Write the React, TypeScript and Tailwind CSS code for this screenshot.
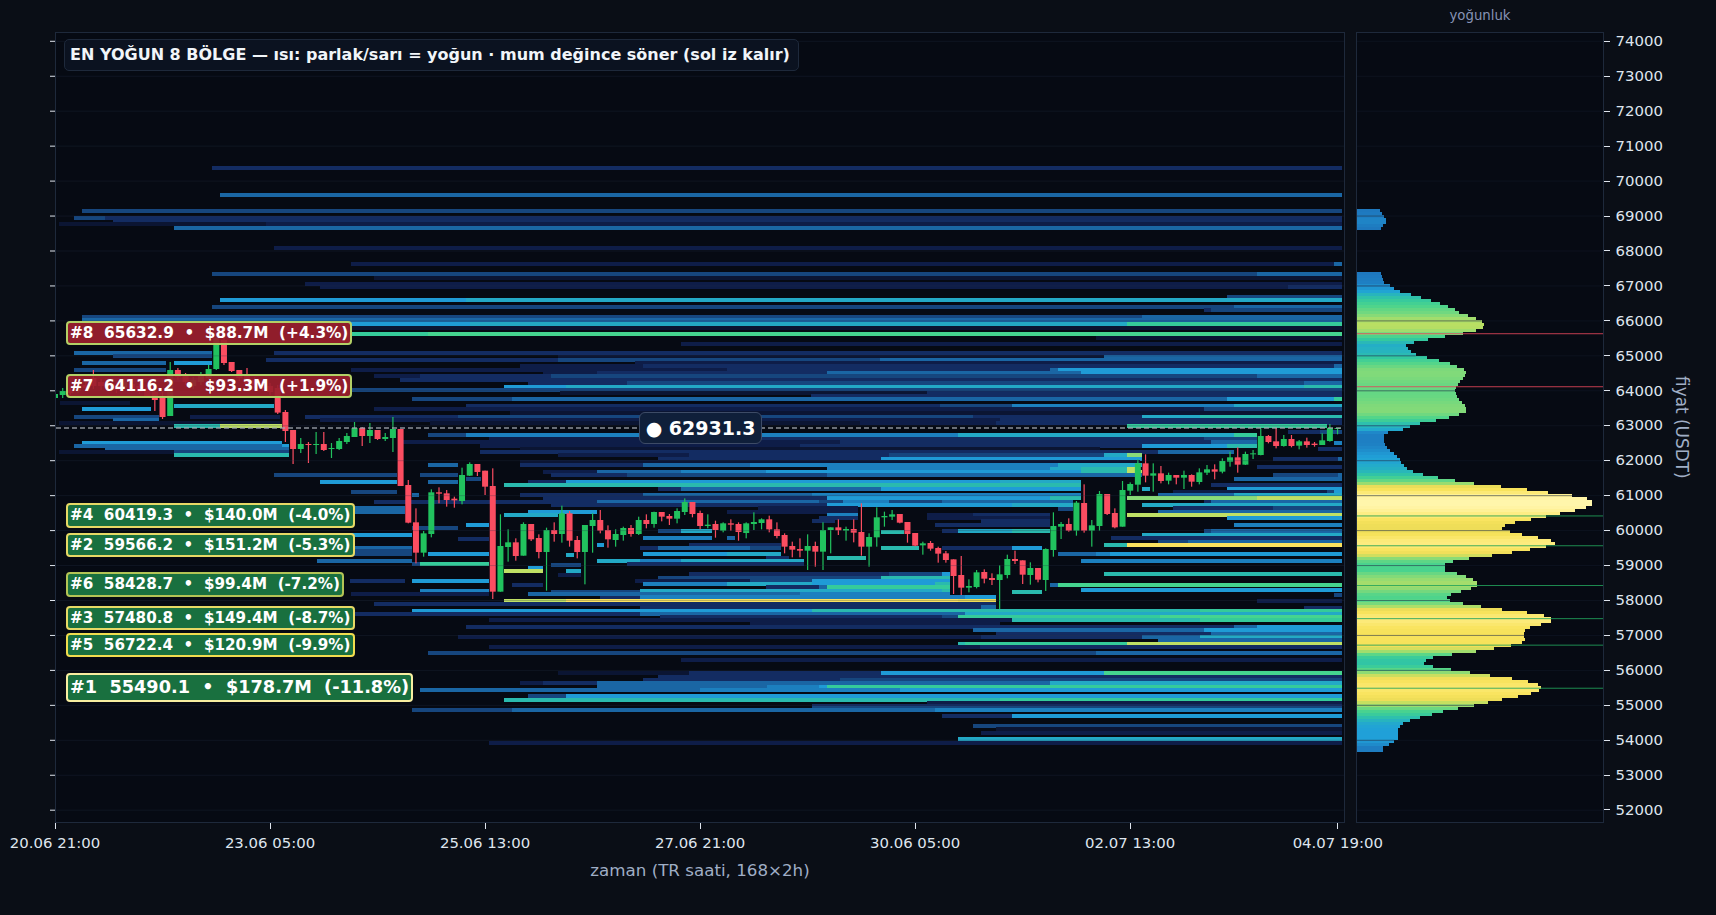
import React from 'react';

// page coordinates of the price scale: 74000 sits at y=41.3, 1000 USDT = 34.95px
const priceY = (p: number) => 41.3 + (74000 - p) * 0.03495;
const candleX = (i: number) => 55 + 7.68 * i;
const RIGHT = 1342;

const HEAT: Record<string, string> = {
  a: '#0b1533', b: '#0e1d48', c: '#132c62', d: '#16467e', e: '#1a66a4', f: '#1c80bf', g: '#1f9bd6',
  h: '#23a9c6', i: '#2abaae', j: '#35cb9a', k: '#45d48f', l: '#8adb78', m: '#bfe065', n: '#f0dc55', o: '#fbe25e',
};

// "y x key x key ... [end]"
const ROWS = [
  '166 212 c', '193 220 e', '209 82 d', '216 74 d 105 c', '219 113 c', '222 59 a 266 b', '226 174 e', '246 274 b',
  '262 351 b 1334 e', '272 212 d 1257 e', '276 374 a', '282 305 b', '285 320 b 1288 c', '295 1227 d', '298 220 g 466 h',
  '305 212 d 1234 e', '308 1204 c 1211 d', '315 82 d 458 d 1142 e', '318 82 e 1158 e', '322 350 g 470 h 1127 j',
  '326 350 a', '332 350 j 428 k', '336 1096 a', '342 681 b', '351 74 e 212', '351 274 c', '354 113 d 212',
  '355 558 a 1104 e', '358 266 c 558 d 880 e', '361 82 e 166', '361 174 g 212', '361 635 b', '364 520 b 643 c 1334 e',
  '368 74 d 166', '368 351 b 727 c 1050 e 1058 g', '371 543 b 597 c 827 e 1081 g', '374 374 b 420 c 551 d 1257 e',
  '378 105 c 200', '378 400 c', '381 528 c 627 d 1304 e', '385 504 g 566 h 1304 i', '388 351 d', '391 120 b 200',
  '391 560 a 927 c', '394 811 c', '397 412 d 512 e 1227 g 1334 j', '401 60 a 130', '404 174 h 274',
  '404 466 c 940 d 1012 f 1234 h', '407 82 g 151', '407 374 b 1204 d', '411 510 a', '415 74 d 159', '415 190 b 280',
  '415 305 c 458 d 973 c 1142 h 1200 i', '418 113 e 159', '418 320 b 1000 c', '421 59 a 280', '421 430 a 860 b 996 c',
  '424 174 i 220 m 282', '424 1127 j 1327', '430 1288 c 1320 d', '433 428 d 466 f 958 h 1234 j 1257',
  '437 489 b 700 c 1204 d 1257', '440 400 b 840 c 1211 e 1257', '441 82 g 282', '441 1334 f', '444 74 e 282 g 289',
  '444 480 b 800 c 1142 g 1227 i 1257', '447 105 e 289', '447 520 a 1100', '447 1318 c', '450 59 a 174 d 289',
  '450 480 c 1158 e 1234', '453 174 i 289', '453 558 b 689 c 889 d 1104 h 1127 l 1142', '457 658 c 881 g 1142',
  '457 1273 c 1338 e', '460 520 a 1140', '463 428 e 458', '463 520 c 643 e 750 f 1058 h 1142', '465 1257 c',
  '467 827 f 1050 h 1081 i 1127 m 1135', '470 543 b 597 e 681 f 766 g 1081 i 1127 m 1142', '473 274 d 397', '473 420 d 458',
  '473 551 c 627 d 827 e 1142', '473 1273 d 1338 e', '477 466 d 481', '477 1234 e', '480 320 g 397', '480 428 e 458',
  '480 528 c 566 g 1000 h 1081', '483 504 i 1081', '483 1211 c', '487 658 c 681 e 881 g 1081', '487 1142 h 1150', '487 1227 g',
  '490 351 d 397', '490 1173 b', '490 1327 d', '490 1334 g', '493 412 e 419', '493 520 c 643 e 812 f 1081', '493 1158 e 1234 h',
  '496 543 c 827 g 1050 i 1081', '496 1127 l 1257 m', '500 374 c 543 c 597 e 819 d 843 f 889 d 942 e 1073', '500 1204 c 1211 e',
  '503 551 c 627 c 827 g 1012 h 1073', '503 1142 h', '506 350 e 405', '506 758 b 858', '506 1173 c 1273 d', '507 1058 d 1073',
  '510 350 e 405', '510 528 g 597', '510 727 b 858', '510 1158 e', '513 504 h 558', '513 827 f 858', '513 927 b 973 c 1050', '513 1127 m',
  '516 819 c 858', '516 927 b 1050', '516 1227 g', '519 812 c 835', '519 981 c 1050', '523 466 g 489', '523 935 c 1050', '523 1234 f',
  '526 412 d 458', '529 658 d 681 h 712', '529 942 c 958 h 1012 i 1050', '530 881 i 904', '529 1204 d 1211 e', '533 350 g 412',
  '533 1142 h', '536 643 f 712', '536 727 e 735', '536 1111 c', '537 458 c 489', '540 1158 d 1188 e', '543 597 g 604', '543 689 c 781',
  '543 1104 i 1127 o', '546 350 e 412', '546 640 c 658 e 750 d 781', '546 881 i 919', '546 942 c 1012 g 1042', '549 350 d 412',
  '552 350 d 412', '552 428 g 489', '553 566 h 574', '552 643 g 727 h 781', '552 1058 e 1096 f 1110 g', '556 766 c 789', '556 827 i 866',
  '559 317 e 412', '559 597 h 640 f 681 h 804', '559 1081 f', '562 412 d 420 j 489', '563 551 d 581', '562 627 c 804', '566 528 g 543',
  '569 504 m 543', '569 566 h 581', '572 1104 i', '572 689 c 889 d 942 g 950', '573 558 b 581', '576 658 d 881 i 950', '579 350 c 405',
  '579 412 g 489', '579 635 b 750 d 812 g 950', '582 643 f 727 h 812 g 935 i 950', '583 512 c 543', '583 1050 e 1058 k',
  '585 766 c 819 e 827 j 950', '589 420 f 489', '588 1081 g', '589 640 h 942 i 950', '590 551 d 640', '590 1012 i 1042', '592 351 b 489',
  '592 528 e 640 e 800 f 950', '593 1334 d', '595 640 f 965 g 996', '596 600 c 640', '599 1257 b', '599 504 m 566 o 958 n 996',
  '602 374 c 996', '605 640 c 927 c 981 e 996', '606 1304 c', '609 412 g 812 i 1200 j', '612 350 c 640 e 965 h', '615 660 c 942 d 958 j 1160 k',
  '618 489 b 1012 i 1200 j', '621 750 b 1000', '625 466 c 1234 e 1257 g', '628 973 e 1204 g', '632 996 c 1211 e',
  '635 458 b 981 c 1142 e 1200 h', '638 1158 e', '642 958 i 965 j 1127 m', '645 489 b 980 c', '651 428 d 1096 e', '658 681 b',
  '671 558 a 689 c 881 g 1104 k', '675 658 c', '678 643 c 840 d', '681 520 b 543 c 597 e 1050 h', '685 597 e 767 f 819 g 827 j',
  '688 420 e 700 f 900 g', '694 528 d 566 g', '698 504 i 1000 j', '701 927 b', '704 812 c', '706 812 d', '708 412 d 512 e 935 f',
  '714 942 c 1012 g', '724 973 d', '727 996 a', '731 981 b', '737 958 h', '741 489 b',
].sort((a, b) => parseInt(a) - parseInt(b));

type Candle = [number, number, number, number, 'g' | 'r'];

const thirds = (base: number, list: Candle[]): Candle[] =>
  list.map(([t, b, wt, wb, c]) => [base + t / 3, base + b / 3, base + wt / 3, base + wb / 3, c]);

const CANDLES: Candle[] = [
  [394, 398, 394, 398, 'g'], [391, 395, 388, 398, 'g'], [390, 393, 388, 395, 'r'], [388, 391, 386, 393, 'g'],
  [385, 388, 382, 391, 'r'], [378, 386, 370, 389, 'r'], [382, 386, 379, 390, 'r'], [384, 388, 381, 391, 'g'],
  [385, 390, 382, 393, 'r'], [382, 387, 379, 389, 'g'], [384, 389, 381, 392, 'r'], [386, 392, 384, 394, 'r'],
  [388, 396, 385, 398, 'r'], [392, 400, 388, 411, 'r'], [398, 417, 392, 419, 'r'], [370, 416, 362, 416, 'g'],
  [370, 377, 368, 380, 'r'], [376, 382, 373, 385, 'r'], [380, 386, 377, 389, 'g'], [376, 382, 372, 385, 'g'],
  [369, 378, 365, 381, 'g'], [338, 369, 332, 370, 'g'], [340, 363, 336, 365, 'r'], [362, 371, 362, 372, 'r'],
  [370, 378, 370, 381, 'r'], [376, 384, 368, 386, 'r'], [380, 385, 377, 388, 'r'], [384, 388, 381, 391, 'r'],
  [386, 392, 383, 395, 'r'], [388, 412.6, 385, 414, 'r'], [412, 431, 410, 442, 'r'], [430, 449, 430, 464, 'r'],
  [444, 449, 438, 453, 'g'], [444, 445, 442, 463, 'r'], [444, 445, 432, 454, 'g'], [444, 450, 432, 451, 'r'],
  [448, 449, 443, 458, 'g'], [441, 449, 438, 450, 'g'], [436, 442, 433, 444, 'g'], [428, 437, 422, 437, 'g'],
  [428, 436, 427, 446, 'r'], [430, 436, 423, 443, 'g'], [430, 439, 430, 440, 'r'], [437, 439, 433, 441, 'g'],
  [429, 438, 417, 452, 'g'],
  ...thirds(400, [
    [87, 258, 87, 258, 'r'], [255, 368, 240, 370, 'r'], [367, 458, 325, 490, 'r'], [400, 458, 393, 470, 'g'],
    [277, 402, 268, 412, 'g'], [277, 281, 262, 310, 'r'], [280, 300, 270, 320, 'r'], [296, 301, 290, 323, 'r'],
    [225, 303, 203, 313, 'g'], [192, 227, 187, 228, 'g'], [192, 216, 192, 228, 'r'], [212, 260, 212, 285, 'r'],
    [258, 575, 205, 597, 'r'], [438, 575, 343, 575, 'g'], [427, 441, 388, 485, 'g'], [427, 468, 415, 482, 'r'],
    [372, 467, 367, 467, 'g'], [372, 418, 372, 423, 'r'], [414, 456, 403, 475, 'r'], [390, 456, 383, 572, 'g'],
    [390, 402, 367, 425, 'r'], [340, 402, 317, 428, 'g'], [340, 422, 333, 440, 'r'], [420, 456, 408, 475, 'r'],
    [375, 456, 375, 553, 'g'], [360, 378, 340, 458, 'g'], [360, 392, 330, 400, 'r'], [390, 418, 376, 443, 'r'],
    [402, 420, 388, 440, 'g'], [384, 405, 380, 422, 'g'], [384, 402, 375, 410, 'r'], [360, 402, 350, 405, 'g'],
    [360, 372, 343, 385, 'r'], [336, 372, 335, 383, 'g'], [336, 350, 336, 364, 'r'], [348, 356, 342, 375, 'r'],
    [333, 356, 325, 370, 'g'], [306, 336, 295, 345, 'g'], [306, 342, 306, 352, 'r'], [339, 378, 332, 388, 'r'],
    [374, 378, 343, 385, 'g'], [372, 390, 362, 413, 'r'], [370, 392, 367, 397, 'g'], [370, 374, 358, 392, 'r'],
    [372, 396, 367, 422, 'r'], [370, 399, 367, 415, 'g'], [366, 372, 337, 390, 'g'], [358, 369, 355, 388, 'g'],
    [358, 388, 347, 397, 'r'], [388, 408, 367, 415, 'r'], [405, 440, 400, 460, 'r'], [438, 449, 425, 472, 'r'],
    [447, 452, 415, 472, 'r'],
  ]),
  ...thirds(420, [
    [378, 392, 343, 450, 'g'], [378, 395, 365, 440, 'r'], [330, 395, 307, 450, 'g'], [322, 330, 322, 400, 'g'],
    [322, 331, 298, 345, 'r'], [327, 332, 320, 362, 'g'], [327, 338, 298, 367, 'r'], [336, 380, 250, 407, 'r'],
    [351, 380, 340, 440, 'g'], [292, 352, 262, 380, 'g'], [288, 292, 275, 320, 'g'], [283, 290, 270, 300, 'g'],
    [282, 308, 282, 310, 'r'], [306, 342, 306, 368, 'r'], [339, 377, 339, 379, 'r'], [370, 376, 365, 404, 'g'],
    [369, 386, 363, 392, 'r'], [384, 401, 380, 428, 'r'], [400, 420, 393, 428, 'r'], [418, 468, 418, 522, 'r'],
    [465, 503, 408, 525, 'r'], [498, 503, 478, 517, 'g'], [457, 501, 450, 505, 'g'], [456, 476, 448, 490, 'r'],
    [474, 480, 460, 495, 'r'], [463, 480, 436, 567, 'g'], [417, 465, 404, 475, 'g'], [417, 423, 392, 432, 'r'],
    [421, 464, 421, 492, 'r'], [444, 465, 427, 494, 'g'], [444, 479, 444, 487, 'r'], [387, 480, 385, 513, 'g'],
    [318, 390, 277, 410, 'g'], [312, 320, 306, 357, 'g'], [312, 332, 295, 335, 'r'], [248, 332, 243, 347, 'g'],
    [249, 332, 193, 338, 'r'], [316, 332, 300, 380, 'g'], [222, 318, 213, 332, 'g'], [222, 282, 222, 285, 'r'],
    [279, 322, 265, 325, 'r'], [210, 320, 183, 320, 'g'], [192, 212, 187, 225, 'g'], [130, 194, 118, 215, 'g'],
    [130, 167, 103, 187, 'r'], [160, 167, 130, 215, 'g'], [160, 183, 138, 190, 'r'], [165, 182, 158, 193, 'g'],
    [165, 173, 165, 193, 'r'], [165, 173, 152, 207, 'g'], [165, 185, 163, 200, 'r'], [157, 186, 145, 193, 'g'],
    [148, 158, 135, 165, 'g'], [148, 155, 133, 178, 'r'], [123, 155, 115, 160, 'g'], [112, 125, 95, 140, 'g'],
    [112, 134, 82, 158, 'r'], [102, 134, 95, 135, 'g'], [100, 103, 90, 117, 'g'], [48, 105, 25, 106, 'g'],
    [48, 66, 45, 70, 'r'], [64, 78, 23, 85, 'r'], [57, 78, 45, 80, 'g'], [57, 78, 45, 82, 'r'], [64, 77, 60, 88, 'g'],
    [64, 75, 53, 83, 'r'], [71, 75, 66, 80, 'r'], [61, 75, 40, 75, 'g'], [24, 63, 12, 65, 'g'], [24, 26, 24, 43, 'g'],
  ]),
];

// density profile as control points [y, width]
const PROFILE: [number, number][] = [
  [272, 24], [275, 25], [278, 26], [281, 27], [284, 33], [289, 40], [292, 50], [295, 61], [298, 71], [301, 80], [304, 88],
  [307, 96], [312, 104], [315, 114], [318, 122], [322, 127], [325, 127], [326, 126], [329, 119], [332, 106], [335, 88],
  [338, 71], [341, 57], [344, 49], [352, 55], [355, 66], [358, 78], [361, 90], [365, 100], [368, 107], [372, 109], [375, 108],
  [378, 105], [381, 102], [385, 99], [390, 98], [394, 99], [400, 103], [402, 107], [406, 109], [410, 109], [412, 105],
  [415, 96], [418, 84], [421, 68], [424, 53], [427, 53], [429, 39], [431, 31], [434, 27], [440, 27], [443, 28], [448, 32],
  [451, 36], [457, 42], [461, 44], [467, 50], [471, 58], [474, 70], [477, 87], [481, 108], [484, 134], [487, 163], [491, 191],
  [494, 215], [497, 230], [501, 236], [504, 234], [507, 226], [510, 214], [513, 198], [517, 180], [520, 161], [524, 148],
  [527, 145], [530, 153], [534, 169], [537, 187], [540, 198], [543, 198], [546, 184], [550, 162], [554, 135], [557, 112],
  [560, 96], [563, 88], [570, 88], [571, 95], [573, 104], [577, 114], [580, 120], [585, 120], [587, 114], [590, 104],
  [593, 94], [597, 89], [600, 95], [603, 111], [607, 136], [610, 163], [613, 183], [616, 194], [620, 194], [623, 184],
  [626, 173], [630, 166], [637, 168], [640, 167], [643, 160], [646, 143], [650, 119], [653, 95], [656, 76], [660, 66],
  [663, 68], [666, 80], [669, 101], [673, 125], [676, 149], [679, 168], [683, 181], [686, 184], [690, 181], [693, 170],
  [696, 156], [699, 140], [703, 122], [706, 106], [709, 90], [713, 75], [716, 63], [719, 53], [722, 46], [726, 42],
  [729, 41], [738, 41], [739, 39], [742, 34], [746, 26], [749, 26],
];
const UPPER: [number, number][] = [[209, 23], [212, 25], [215, 27], [218, 29], [221, 29], [223, 27], [226, 24], [229, 24]];

const RAMP: [number, string][] = [
  [0, '#1c6db4'], [24, '#1e78be'], [41, '#20a0d8'], [50, '#25b0c4'], [70, '#33c8a0'], [90, '#4dd48c'], [110, '#85da78'],
  [128, '#bcdf62'], [145, '#eedd58'], [170, '#f8e35c'], [200, '#fdec80'], [236, '#fff6ad'],
];

const rampColor = (w: number) => {
  for (let i = 1; i < RAMP.length; i++) {
    if (w <= RAMP[i][0]) {
      const [w0, c0] = RAMP[i - 1];
      const [w1, c1] = RAMP[i];
      const t = (w - w0) / (w1 - w0);
      const ch = (s: number) => {
        const a = parseInt(c0.slice(s, s + 2), 16);
        const b = parseInt(c1.slice(s, s + 2), 16);
        return Math.round(a + (b - a) * t);
      };
      return `rgb(${ch(1)},${ch(3)},${ch(5)})`;
    }
  }
  return RAMP[RAMP.length - 1][1];
};

const bins = (points: [number, number][]) => {
  const out: { y: number; w: number }[] = [];
  for (let y = points[0][0]; y < points[points.length - 1][0] + 1; y += 3) {
    let j = 0;
    while (j < points.length - 2 && points[j + 1][0] <= y) j++;
    const [y0, w0] = points[j];
    const [y1, w1] = points[j + 1];
    out.push({ y, w: w0 + ((w1 - w0) * Math.min(1, (y - y0) / (y1 - y0))) });
  }
  return out;
};

const TICKS = Array.from({ length: 23 }, (_, i) => 74000 - i * 1000);
const LEVELS = [
  { price: 65632.9, up: true }, { price: 64116.2, up: true }, { price: 60419.3, up: false }, { price: 59566.2, up: false },
  { price: 58428.7, up: false }, { price: 57480.8, up: false }, { price: 56722.4, up: false }, { price: 55490.1, up: false },
];

const BADGES = [
  { text: '#8  65632.9  •  $88.7M  (+4.3%)', cls: 'top-[288px] bg-[#9b1f2ded] border-[#b3d066] text-[15.3px] h-[24px]' },
  { text: '#7  64116.2  •  $93.3M  (+1.9%)', cls: 'top-[341px] bg-[#9b1f2ded] border-[#b3d066] text-[15.3px] h-[24px]' },
  { text: '#4  60419.3  •  $140.0M  (-4.0%)', cls: 'top-[470px] bg-[#19703f] border-[#e6d965] text-[15.2px] h-[25px]' },
  { text: '#2  59566.2  •  $151.2M  (-5.3%)', cls: 'top-[500px] bg-[#19703f] border-[#e6d965] text-[15.2px] h-[24px]' },
  { text: '#6  58428.7  •  $99.4M  (-7.2%)', cls: 'top-[539px] bg-[#19703f] border-[#b3c455] text-[15.2px] h-[25px]' },
  { text: '#3  57480.8  •  $149.4M  (-8.7%)', cls: 'top-[573px] bg-[#19703f] border-[#e6d965] text-[15.2px] h-[24px]' },
  { text: '#5  56722.4  •  $120.9M  (-9.9%)', cls: 'top-[600px] bg-[#19703f] border-[#f0dd4e] text-[15.2px] h-[24px]' },
  { text: '#1  55490.1  •  $178.7M  (-11.8%)', cls: 'top-[640px] bg-[#19703f] border-[#f8efa0] text-[17.7px] h-[29px]' },
];

const XLABELS = ['20.06 21:00', '23.06 05:00', '25.06 13:00', '27.06 21:00', '30.06 05:00', '02.07 13:00'];

const Heatmap = () => (
  <g shapeRendering="crispEdges">
    {ROWS.map((row) => {
      const t = row.split(' ');
      const y = Number(t[0]);
      const n = Math.floor((t.length - 1) / 2);
      const end = t.length % 2 === 0 ? Number(t[t.length - 1]) : RIGHT;
      return Array.from({ length: n }, (_, s) => {
        const x0 = Number(t[1 + s * 2]);
        const x1 = s < n - 1 ? Number(t[3 + s * 2]) : end;
        return <rect key={`${row}-${s}`} x={x0} y={y} width={x1 - x0} height={3.6} fill={HEAT[t[2 + s * 2]]} />;
      });
    })}
  </g>
);

const Candles = () => (
  <g clipPath="url(#plot-area)">
    {CANDLES.map(([top, bot, wt, wb, c], i) => {
      const x = candleX(i);
      const fill = c === 'g' ? '#21c25e' : '#fb4d61';
      return (
        <g key={i} fill={fill}>
          <rect x={x - 0.6} y={wt} width={1.2} height={Math.max(0, wb - wt)} />
          <rect x={x - 3} y={top} width={6} height={Math.max(1, bot - top)} />
        </g>
      );
    })}
  </g>
);

const GridLines = ({ from, to, opacity }: { from: number; to: number; opacity: number }) => (
  <g>
    {TICKS.map((p) => (
      <line key={p} x1={from} x2={to} y1={priceY(p)} y2={priceY(p)} stroke="#263349" strokeOpacity={opacity} />
    ))}
  </g>
);

const App: React.FC = () => {
  const density = [...bins(UPPER), ...bins(PROFILE)];

  return (
    <div className="h-[915px] w-full overflow-hidden bg-[#0a0e16] font-['DejaVu_Sans',sans-serif]">
      <div className="grid grid-cols-[1290px_11px_248px_112px] grid-rows-[32px_791px_92px] pl-[55px]">
        {/* top strip */}
        <div className="col-start-3 flex items-end justify-center pb-[6px] text-[13.3px] text-[#8692b4]">yoğunluk</div>

        {/* main chart */}
        <div className="relative col-start-1 row-start-2 border border-[#1e293b] bg-[#060a13]">
          <svg className="absolute inset-0 overflow-visible" width={1288} height={789} viewBox="56 33 1288 789">
            <defs>
              <clipPath id="plot-area">
                <rect x={56} y={33} width={1288} height={789} />
              </clipPath>
            </defs>
            <Heatmap />
            <Candles />
            <GridLines from={56} to={1344} opacity={0.28} />
            {TICKS.map((p) => (
              <line key={p} x1={50} x2={55} y1={priceY(p)} y2={priceY(p)} stroke="#dfe5ee" />
            ))}
            <line x1={56} x2={1344} y1={428} y2={428} stroke="#a3a9b3" strokeOpacity={0.85} strokeWidth={1.3} strokeDasharray="5 3" />
          </svg>

          <div className="absolute left-[8px] top-[6px] flex h-[32px] w-[735px] items-center whitespace-pre rounded-[5px] border border-[#1e293b] bg-[#0b1220] pl-[5px] text-[16px] font-bold text-[#f1f5f9]">
            EN YOĞUN 8 BÖLGE — ısı: parlak/sarı = yoğun · mum değince söner (sol iz kalır)
          </div>

          {BADGES.map((b) => (
            <div
              key={b.text}
              className={`absolute left-[10px] flex items-center whitespace-pre rounded-[4px] border-2 px-[2px] font-bold text-white ${b.cls}`}
            >
              {b.text}
            </div>
          ))}

          <div className="absolute left-[583px] top-[379px] flex h-[32px] w-[123px] items-center justify-center whitespace-pre rounded-[6px] border border-[#3d4b66] bg-[#0f1f3a] text-[19px] font-bold text-white">
            ● 62931.3
          </div>
        </div>

        {/* density panel */}
        <div className="relative col-start-3 row-start-2 border border-[#1e293b] bg-[#060a13]">
          <svg className="absolute inset-0" width={246} height={789} viewBox="1357 33 246 789">
            <g shapeRendering="crispEdges">
              {density.map((d) => (
                <rect key={d.y} x={1357} y={d.y} width={Math.round(d.w)} height={3} fill={rampColor(d.w)} />
              ))}
            </g>
            <GridLines from={1357} to={1603} opacity={0.22} />
            {TICKS.map((p) => {
              // the scale line reads darker where it crosses a bar
              const y = priceY(p);
              const bar = density.find((d) => y >= d.y && y < d.y + 3);
              if (!bar) return null;
              return <line key={p} x1={1357} x2={1357 + bar.w} y1={y} y2={y} stroke="#263349" strokeOpacity={0.45} />;
            })}
            {LEVELS.map((l) => (
              <line
                key={l.price}
                x1={1357}
                x2={1603}
                y1={priceY(l.price)}
                y2={priceY(l.price)}
                stroke={l.up ? '#e2475a' : '#22a35c'}
                strokeOpacity={0.85}
              />
            ))}
          </svg>
        </div>

        {/* price axis */}
        <div className="col-start-4 row-start-2 flex h-[791px]">
          <div className="-mt-[8.17px] flex w-[65px] flex-col">
            {TICKS.map((p) => (
              <div key={p} className="flex h-[34.95px] shrink-0 items-center">
                <div className="h-px w-[6px] bg-[#dfe5ee]" />
                <span className="ml-[5.5px] text-[14.9px] text-[#dfe5ee]">{p}</span>
              </div>
            ))}
          </div>
          <div className="flex justify-center text-[16.9px] text-[#a0aec6] [writing-mode:vertical-rl]">fiyat (USDT)</div>
        </div>

        {/* time axis */}
        <div className="col-start-1 row-start-3 flex flex-col">
          <div className="-ml-[107.52px] flex text-[14.9px] text-[#dfe5ee]">
            {XLABELS.map((t) => (
              <div key={t} className="flex w-[215.04px] shrink-0 flex-col items-center">
                <div className="h-[6px] w-px bg-[#dfe5ee]" />
                <span className="mt-[3px]">{t}</span>
              </div>
            ))}
            <div className="flex w-[200.2px] shrink-0 flex-col items-center">
              <div className="h-[6px] w-px bg-[#dfe5ee]" />
              <span className="mt-[3px]">04.07 19:00</span>
            </div>
          </div>
          <div className="mt-[4px] text-center text-[16.7px] text-[#a0aec6]">zaman (TR saati, 168×2h)</div>
        </div>
      </div>
    </div>
  );
};

export default App;
